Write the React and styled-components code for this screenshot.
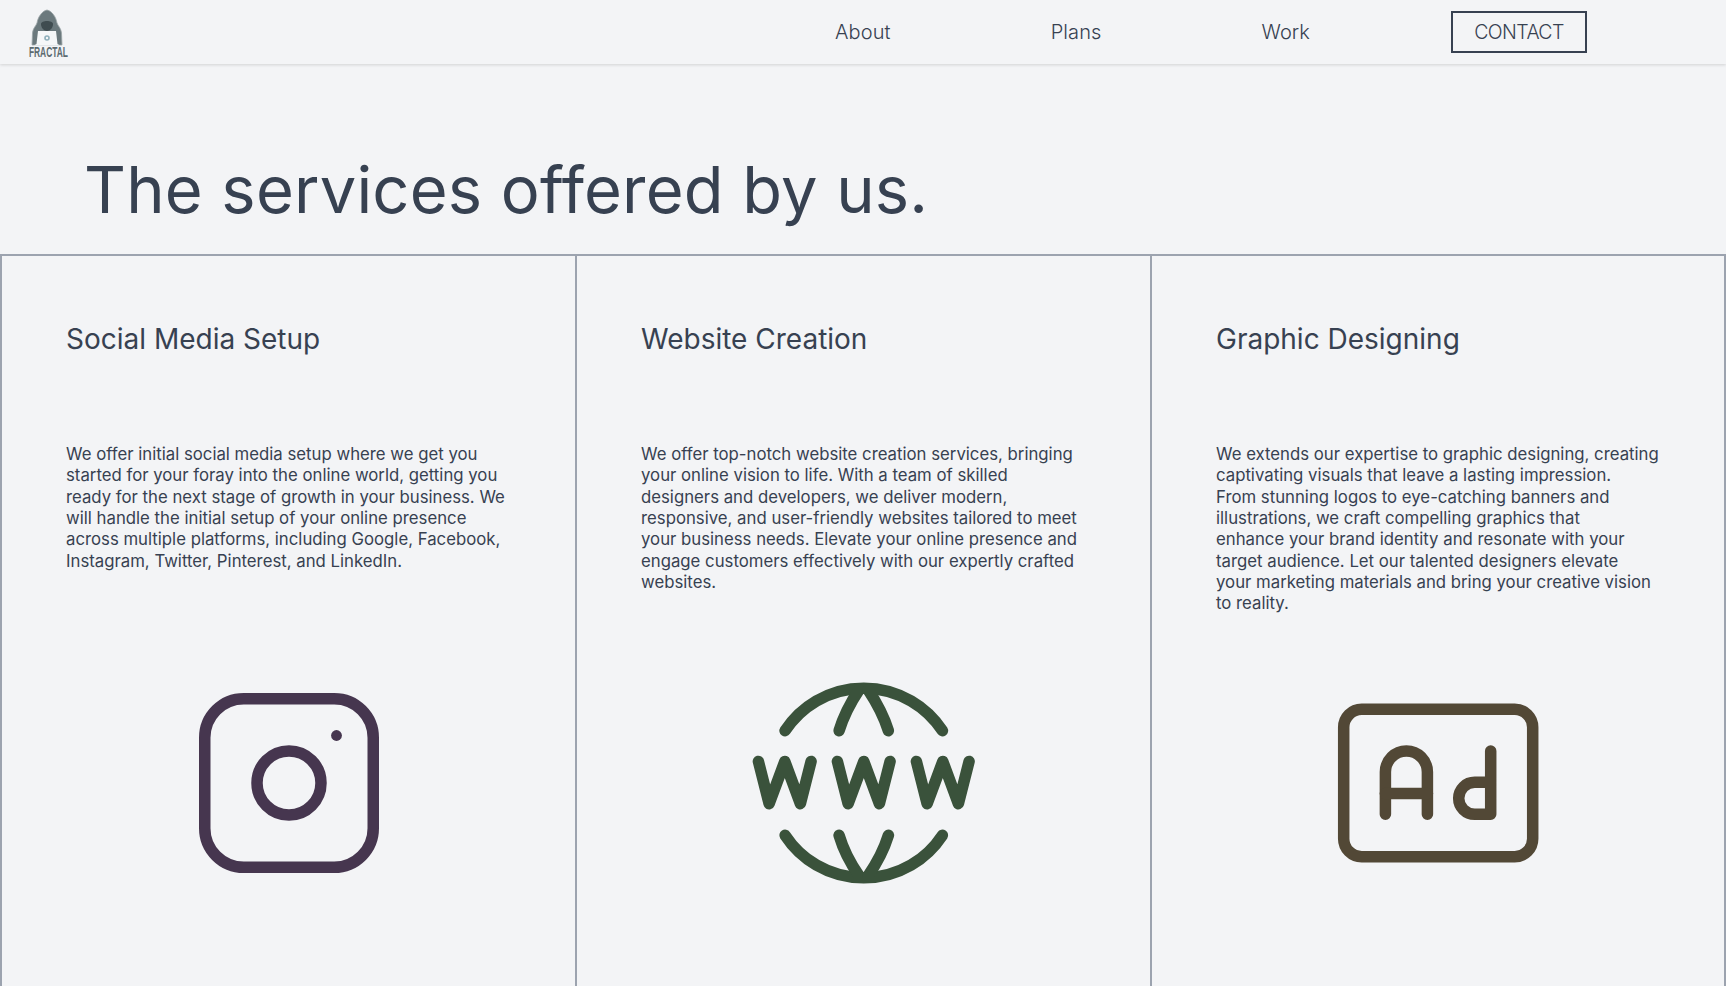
import styled, { createGlobalStyle } from "styled-components";

const GlobalStyle = createGlobalStyle`
  html, body {
    margin: 0;
    padding: 0;
    height: 100%;
    overflow: hidden;
    background: #f3f4f6;
  }
  * {
    box-sizing: border-box;
  }
`;

const Page = styled.div`
  height: 100vh;
  overflow: hidden;
  font-family: "Inter", "Noto Sans", sans-serif;
  color: #374151;
  background: #f3f4f6;
`;

const Header = styled.header`
  height: 64px;
  display: flex;
  align-items: center;
  justify-content: space-between;
  padding: 0 139px 0 27px;
  background: #f3f4f6;
  box-shadow: 0 1px 3px rgba(0, 0, 0, 0.14);
`;

const LogoWrap = styled.div`
  width: 42px;
  display: flex;
  flex-direction: column;
  align-items: center;
`;

const LogoMark = styled.svg`
  display: block;
  width: 42px;
  height: 38px;
`;

const LogoText = styled.span`
  display: block;
  font-family: "Liberation Sans", sans-serif;
  font-size: 10.5px;
  line-height: 11px;
  font-weight: 700;
  color: #5c6b70;
  transform: scale(0.8, 1.45);
`;

const Nav = styled.nav`
  display: flex;
  align-items: center;
  gap: 160px;
`;

const NavLink = styled.a`
  font-size: 20px;
  font-weight: 300;
  letter-spacing: 0.1px;
  color: #374151;
  text-decoration: none;
`;

const ContactButton = styled.a`
  width: 136px;
  height: 42px;
  margin-left: -19px;
  display: flex;
  align-items: center;
  justify-content: center;
  border: 2px solid #374151;
  font-size: 19.5px;
  font-weight: 300;
  letter-spacing: -0.6px;
  color: #374151;
`;

const TitleSection = styled.section`
  height: 190px;
  padding: 86px 0 0 84px;
`;

const Title = styled.h1`
  margin: 0;
  font-size: 65px;
  line-height: 80px;
  font-weight: 400;
  letter-spacing: 0.2px;
  white-space: nowrap;
`;

const Grid = styled.div`
  display: grid;
  grid-template-columns: 575px 575px minmax(0, 1fr);
  border-top: 2px solid #9ca3af;
  height: 800px;
`;

const Card = styled.article`
  min-width: 0;
  padding: 61px 64px 0;
  border-left: 2px solid #9ca3af;
  border-right: ${(p) => (p.$last ? "2px solid #9ca3af" : "none")};
`;

const CardTitle = styled.h2`
  margin: 0 0 82px;
  height: 45px;
  font-size: 28px;
  line-height: 45px;
  font-weight: 400;
  white-space: nowrap;
`;

const CardText = styled.p`
  margin: 0;
  height: 219px;
  font-size: 16.75px;
  line-height: 21.33px;
  font-weight: 400;
  white-space: nowrap;
`;

const IconBox = styled.div`
  height: 239px;
  display: flex;
  align-items: center;
  justify-content: center;
`;

const IconSvg = styled.svg`
  display: block;
  flex: none;
  fill: none;
  stroke: ${(p) => p.$color};
  stroke-width: 11.5;
  stroke-linecap: round;
  stroke-linejoin: round;
`;

const IconDot = styled.circle`
  fill: ${(p) => p.$color};
  stroke: none;
`;

const FractalLogo = () => (
  <LogoWrap>
    <LogoMark viewBox="0 0 42 38">
      <path
        d="M20 2 C15 3 11 9 10 15 C9 18 6 20 5.5 25 L5 37 H35 L34.5 25 C34 20 31 18 30 15 C29 9 25 3 20 2 Z"
        fill="#6b797d"
        stroke="#9aa5a7"
        strokeWidth="0.8"
      />
      <path
        d="M14 16 C14 12 26 12 26 16 C26 20 23 23 20 23 C17 23 14 20 14 16 Z"
        fill="#3f4c50"
      />
      <path d="M11 23 H29 L30.5 36 L33 37.5 H7 L9.5 36 Z" fill="#f5f7f8" />
      <circle cx="20" cy="30" r="2.8" fill="#8fb0bb" />
      <circle cx="20" cy="30" r="1.2" fill="#f5f7f8" />
    </LogoMark>
    <LogoText>FRACTAL</LogoText>
  </LogoWrap>
);

const InstagramIcon = () => (
  <IconSvg $color="#46364f" width="180" height="180" viewBox="0 0 180 180">
    <rect x="5.75" y="5.75" width="168.5" height="168.5" rx="39" />
    <circle cx="90" cy="90" r="32" />
    <IconDot $color="#46364f" cx="137.5" cy="42.5" r="5.4" />
  </IconSvg>
);

const W = ({ dx }) => (
  <path
    d={`M${18.3 + dx} 90.7 L${29 + dx} 133 L${44.7 + dx} 90.7 L${60.3 + dx} 133 L${71 + dx} 90.7`}
  />
);

const WwwIcon = () => (
  <IconSvg $color="#3a523b" width="250" height="220" viewBox="-1.1 2.3 250 220">
    <path d="M45 60 A94 94 0 0 1 202.3 60" />
    <path d="M99 60 Q105 40 119 19" />
    <path d="M148.3 60 Q142 40 128 19" />
    <W dx={0} />
    <W dx={79} />
    <W dx={158} />
    <path d="M45 164.6 A94 94 0 0 0 202.3 164.6" />
    <path d="M99 164.6 Q105 185 119 205" />
    <path d="M148.3 164.6 Q142 185 128 205" />
  </IconSvg>
);

const AdIcon = () => (
  <IconSvg $color="#524836" width="230" height="180" viewBox="3.3 2.7 230 180">
    <rect x="24" y="19" width="189" height="147.4" rx="18" />
    <path d="M65.7 124 V81.7 a21 21 0 0 1 42 0 V124" />
    <path d="M65.7 103.3 H107.7" />
    <path d="M171 60.7 V124 H155 a16 16 0 0 1 0 -32 H171" />
  </IconSvg>
);

const services = [
  {
    title: "Social Media Setup",
    lines: [
      "We offer initial social media setup where we get you",
      "started for your foray into the online world, getting you",
      "ready for the next stage of growth in your business. We",
      "will handle the initial setup of your online presence",
      "across multiple platforms, including Google, Facebook,",
      "Instagram, Twitter, Pinterest, and LinkedIn.",
    ],
    icon: <InstagramIcon />,
  },
  {
    title: "Website Creation",
    lines: [
      "We offer top-notch website creation services, bringing",
      "your online vision to life. With a team of skilled",
      "designers and developers, we deliver modern,",
      "responsive, and user-friendly websites tailored to meet",
      "your business needs. Elevate your online presence and",
      "engage customers effectively with our expertly crafted",
      "websites.",
    ],
    icon: <WwwIcon />,
  },
  {
    title: "Graphic Designing",
    lines: [
      "We extends our expertise to graphic designing, creating",
      "captivating visuals that leave a lasting impression.",
      "From stunning logos to eye-catching banners and",
      "illustrations, we craft compelling graphics that",
      "enhance your brand identity and resonate with your",
      "target audience. Let our talented designers elevate",
      "your marketing materials and bring your creative vision",
      "to reality.",
    ],
    icon: <AdIcon />,
  },
];

const App = () => {
  return (
    <Page>
      <GlobalStyle />
      <Header>
        <FractalLogo />
        <Nav>
          <NavLink>About</NavLink>
          <NavLink>Plans</NavLink>
          <NavLink>Work</NavLink>
          <ContactButton>CONTACT</ContactButton>
        </Nav>
      </Header>
      <TitleSection>
        <Title>The services offered by us.</Title>
      </TitleSection>
      <Grid>
        {services.map((s, i) => (
          <Card key={s.title} $last={i === services.length - 1}>
            <CardTitle>{s.title}</CardTitle>
            <CardText>
              {s.lines.map((line) => (
                <span key={line}>
                  {line}
                  <br />
                </span>
              ))}
            </CardText>
            <IconBox>{s.icon}</IconBox>
          </Card>
        ))}
      </Grid>
    </Page>
  );
};

export default App;
